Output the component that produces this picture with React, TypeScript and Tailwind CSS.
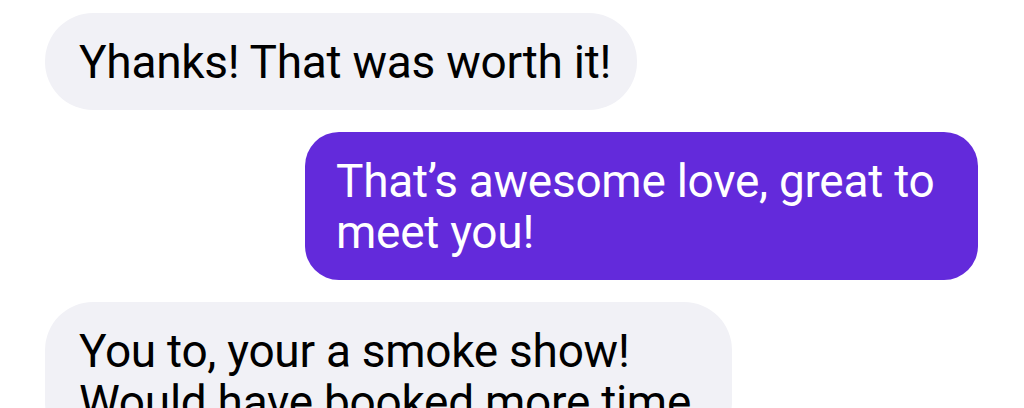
import React from 'react';

interface Bubble {
    id: string;
    mine: boolean;
    lines: string[];
    width: string;
}

const bubbles: Bubble[] = [
    {id: '1', mine: false, lines: ['Yhanks! That was worth it!'], width: 'w-[592px]'},
    {id: '2', mine: true, lines: ['That\u2019s awesome love, great to', 'meet you!'], width: 'w-[673px]'},
    {id: '3', mine: false, lines: ['You to, your a smoke show!', 'Would have booked more time'], width: 'w-[687px]'},
];

export default function App() {
    return (
        <div className="w-[1024px] h-[408px] overflow-hidden bg-white font-['Roboto','Liberation_Sans',sans-serif]">
            <div className="flex flex-col gap-[22px] pt-[13px] pl-[45px] pr-[46px]">
                {bubbles.map((msg) => (
                    <div key={msg.id} className={`flex ${msg.mine ? 'justify-end' : 'justify-start'}`}>
                        <div
                            className={`${msg.width} shrink-0 pt-[24px] pb-[22px] text-[46px] leading-[51px] tracking-[-0.006em] whitespace-nowrap ${msg.mine ? 'bg-[#632adb] text-white rounded-[34px] pl-[31px]' : 'bg-[#f1f1f6] text-black rounded-[48px] pl-[34px]'}`}>
                            {msg.lines.map((line, i) => (
                                <span key={i} className="block">{line}</span>
                            ))}
                        </div>
                    </div>
                ))}
            </div>
        </div>
    );
}
